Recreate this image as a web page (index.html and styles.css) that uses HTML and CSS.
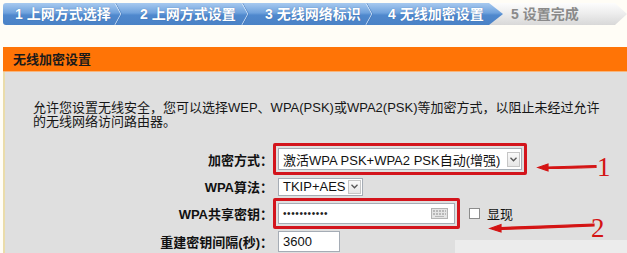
FILE: index.html
```html
<!doctype html>
<html>
  <head>
    <meta charset="utf-8">
    <title>无线加密设置</title>
    <link rel="stylesheet" href="styles.css">
  </head>
  <body>
    <div class="page">
      <div class="steps">
        <div class="steps-done">
          <div class="step step-1">1 上网方式选择</div>
          <div class="step step-2">2 上网方式设置</div>
          <div class="step step-3">3 无线网络标识</div>
          <div class="step step-current">4 无线加密设置</div>
        </div>
        <div class="step-todo">5 设置完成</div>
      </div>

      <div class="section-title">无线加密设置</div>

      <div class="panel">
        <p class="intro">允许您设置无线安全，您可以选择WEP、WPA(PSK)或WPA2(PSK)等加密方式，以阻止未经过允许<br>的无线网络访问路由器。</p>

        <div class="form">
          <div class="label">加密方式：</div>
          <div class="field">
            <div class="mark">
              <div class="select select-mode">
                <span>激活WPA PSK+WPA2 PSK自动(增强)</span>
                <span class="caret"><svg width="7" height="5" viewBox="0 0 7 5"><path d="M0.5 0.8 L3.5 3.8 L6.5 0.8" fill="none" stroke="#555" stroke-width="1.3"/></svg></span>
              </div>
            </div>
          </div>

          <div class="label">WPA算法：</div>
          <div class="field">
            <div class="select select-algo plain">
              <span>TKIP+AES</span>
              <span class="caret"><svg width="7" height="5" viewBox="0 0 7 5"><path d="M0.5 0.8 L3.5 3.8 L6.5 0.8" fill="none" stroke="#555" stroke-width="1.3"/></svg></span>
            </div>
          </div>

          <div class="label">WPA共享密钥：</div>
          <div class="field field-key">
            <div class="mark">
              <div class="input input-key">
                <span class="dots">•••••••••••</span>
                <svg class="kbd" width="17" height="11" viewBox="0 0 17 11">
                  <rect x="0.5" y="0.5" width="16" height="10" fill="#e4e4e4" stroke="#b4b4b4"/>
                  <g fill="#b8b8b8">
                    <rect x="2" y="2" width="2" height="2"/><rect x="5" y="2" width="2" height="2"/><rect x="8" y="2" width="2" height="2"/><rect x="11" y="2" width="2" height="2"/><rect x="14" y="2" width="1" height="2"/>
                    <rect x="2" y="5" width="2" height="2"/><rect x="5" y="5" width="2" height="2"/><rect x="8" y="5" width="2" height="2"/><rect x="11" y="5" width="2" height="2"/><rect x="14" y="5" width="1" height="2"/>
                    <rect x="4" y="8" width="9" height="1"/>
                  </g>
                </svg>
              </div>
            </div>
            <label class="show-key"><span class="check"></span>显现</label>
          </div>

          <div class="label">重建密钥间隔(秒)：</div>
          <div class="field">
            <div class="input input-interval plain">3600</div>
          </div>
        </div>

        <div class="panel-foot"></div>
      </div>

      <svg class="notes" width="627" height="253" viewBox="0 0 627 253">
        <path d="M596 165.5 C580 166 562 166.5 548 167 L548 164 L538 167.5 L548 171 L548 168.5 C562 168.5 580 168 596 167.5 Z" fill="#d41414" stroke="#d41414" stroke-width="1.2"/>
        <text x="597" y="176" class="note-num">1</text>
        <path d="M594 224 C570 225 530 226.5 501 227.5 L501 224.5 L490 228.5 L501 232 L501 229.5 C530 228.5 570 227 594 226 Z" fill="#d41414" stroke="#d41414" stroke-width="1.2"/>
        <text x="591" y="237" class="note-num">2</text>
      </svg>
    </div>
  </body>
</html>
```

FILE: styles.css
```css
* {
  box-sizing: border-box;
}

html,
body {
  margin: 0;
  padding: 0;
  background: #fffdf6;
  overflow: hidden;
}
body {
  font-family: "Liberation Sans", "Noto Sans CJK SC", sans-serif;
  font-size: 13px;
  color: #111;
}
.page {
  position: relative;
  width: 627px;
  height: 253px;
  overflow: hidden;
}

/* wizard steps */
.steps {
  display: flex;
  height: 22px;
  margin: 3px 0 0 3px;
}
.steps-done {
  display: flex;
  width: 500px;
  height: 22px;
  position: relative;
  z-index: 1;
  border-radius: 3px 0 0 3px;
  background: linear-gradient(#a7c9ef, #6fa2dd 45%, #4f88cd 55%, #4a82c6);
  clip-path: polygon(0 0, 486px 0, 500px 11px, 486px 22px, 0 22px);
}
.step {
  position: relative;
  line-height: 22px;
  font-size: 14px;
  color: #fff;
  font-weight: bold;
  white-space: nowrap;
  text-shadow: 0 0 1px rgba(30, 70, 130, 0.6);
}
.step::after {
  content: "";
  position: absolute;
  top: 3px;
  right: 3px;
  width: 15px;
  height: 15px;
  border-top: 1px solid rgba(225, 238, 252, 0.9);
  border-right: 1px solid rgba(225, 238, 252, 0.9);
  box-shadow: 1px -1px 0 rgba(60, 110, 180, 0.6);
  transform: scaleX(0.55) rotate(45deg);
}
.step-1 {
  width: 123px;
  padding-left: 12px;
}
.step-2 {
  width: 127px;
  padding-left: 14px;
}
.step-3 {
  width: 124px;
  padding-left: 12px;
}
.step-current {
  padding-left: 11px;
}
.step-current::after {
  display: none;
}
.step-todo {
  flex: 1;
  height: 22px;
  margin-left: -14px;
  padding-left: 22px;
  line-height: 22px;
  font-size: 14px;
  color: #8a8a8a;
  font-weight: bold;
  background: linear-gradient(#fdfdfd, #ececec 50%, #d8d8d8);
  clip-path: polygon(0 0, calc(100% - 12px) 0, 100% 11px, calc(100% - 12px) 22px, 0 22px);
}

/* section */
.section-title {
  margin: 22px 0 0 3px;
  height: 25px;
  padding-left: 10px;
  line-height: 25px;
  font-weight: bold;
  color: #1a1a1a;
  background: #ff7406;
  border-bottom: 1px solid #f7b57c;
}
.panel {
  position: relative;
  margin-left: 3px;
  height: 200px;
  padding-top: 29px;
  background: #dfdfdf;
  border-left: 2px solid #eadcaa;
}
.intro {
  margin: 0 0 14px;
  padding-left: 28px;
  line-height: 14px;
  color: #161616;
}

/* form */
.form {
  display: grid;
  grid-template-columns: 268px auto;
  row-gap: 2px;
  align-items: center;
}
.label {
  text-align: right;
  font-weight: bold;
  color: #111;
  white-space: nowrap;
}
.field {
  display: flex;
  align-items: center;
}
.mark {
  border: 3px solid #d3141c;
  border-radius: 2px;
  padding: 2px;
}
.plain {
  margin-left: 5px;
}
.select,
.input {
  display: flex;
  align-items: center;
  background: #fff;
  border: 1px solid #a5acb5;
  padding-left: 4px;
}
.select-mode {
  width: 244px;
  height: 22px;
  justify-content: space-between;
  padding-right: 1px;
}
.select-algo {
  width: 85px;
  height: 18px;
  justify-content: space-between;
  padding-right: 1px;
}
.caret {
  display: flex;
  align-items: center;
  justify-content: center;
  width: 13px;
  height: 15px;
  border: 1px solid #c6c6c6;
  background: linear-gradient(#fafafa, #e6e6e6);
}
.select-algo .caret {
  height: 14px;
}
.input-key {
  width: 177px;
  height: 21px;
  justify-content: space-between;
  padding-right: 6px;
}
.dots {
  font-size: 10px;
  letter-spacing: 0.6px;
  color: #222;
}
.show-key {
  display: flex;
  align-items: center;
  margin-left: 9px;
  color: #111;
}
.check {
  width: 11px;
  height: 11px;
  margin-right: 7px;
  border: 1px solid #8c8c8c;
  background: #fff;
}
.input-interval {
  width: 62px;
  height: 21px;
}
.panel-foot {
  position: absolute;
  left: 450px;
  top: 168px;
  width: 180px;
  height: 20px;
  background: #ececec;
}

/* red hand annotations */
.notes {
  position: absolute;
  left: 0;
  top: 0;
  pointer-events: none;
}
.note-num {
  font-family: "Liberation Serif", serif;
  font-size: 27px;
  fill: #d41414;
}
```
